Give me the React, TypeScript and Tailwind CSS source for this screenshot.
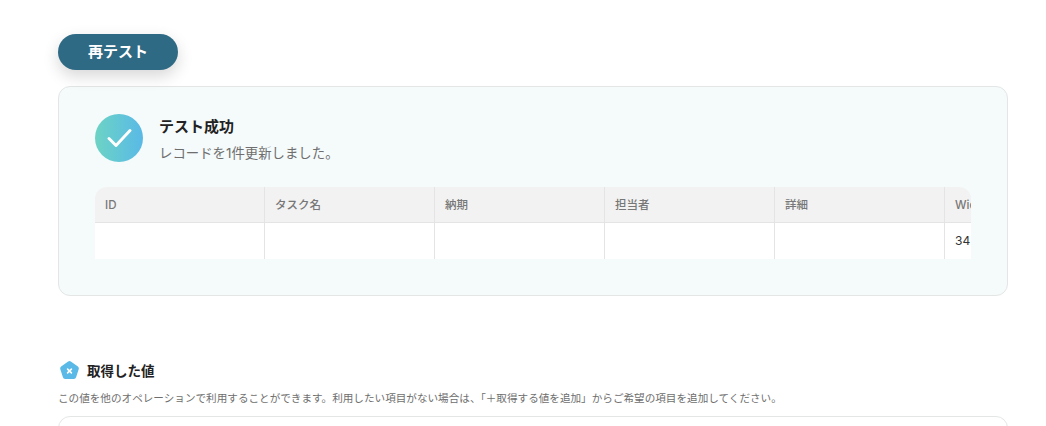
const columns = ["ID", "タスク名", "納期", "担当者", "詳細", "Width"];
const values = ["", "", "", "", "", "34"];

function CheckBadge() {
  return (
    <div className="flex h-12 w-12 shrink-0 items-center justify-center rounded-full bg-gradient-to-r from-[#6dd3c4] to-[#5ab9e6]">
      <svg width="25" height="20" viewBox="0 0 25 20" fill="none">
        <path d="M2 10.5L9 17.5L23 2.5" stroke="white" strokeWidth="2.9" strokeLinecap="round" strokeLinejoin="round" />
      </svg>
    </div>
  );
}

function PentagonIcon() {
  return (
    <svg width="21" height="21" viewBox="0 0 22 22" fill="none">
      <path
        d="M9.6 1.5a2.4 2.4 0 0 1 2.8 0l7.4 5.3a2.4 2.4 0 0 1 .9 2.7l-2.8 8.6a2.4 2.4 0 0 1-2.3 1.7H6.4a2.4 2.4 0 0 1-2.3-1.7L1.3 9.5a2.4 2.4 0 0 1 .9-2.7z"
        fill="#5ab9e6"
      />
      <path d="M9 9.5L13 13.5M13 9.5L9 13.5" stroke="white" strokeWidth="1.7" strokeLinecap="round" />
    </svg>
  );
}

export default function App() {
  return (
    <main className="h-[426px] overflow-hidden bg-white pt-[34px] pl-[58px] pr-[38px] font-['Inter','Noto_Sans_CJK_JP',sans-serif]">
      <button className="h-9 w-[120px] rounded-full bg-[#2f6a85] text-[15px] font-bold text-white shadow-[0_6px_16px_rgba(0,0,0,0.16)]">
        再テスト
      </button>

      <section className="mt-4 h-[210px] rounded-xl border border-[#e4e6e6] bg-[#f5fafa] px-9 pt-[27px]">
        <div className="flex items-start gap-4">
          <CheckBadge />
          <div>
            <h2 className="text-[15px] leading-[26px] font-bold text-[#222222]">テスト成功</h2>
            <p className="text-[13.4px] leading-[26px] text-[#6e6e6e]">レコードを1件更新しました。</p>
          </div>
        </div>

        <div className="mt-[21px] overflow-hidden rounded-t-xl">
          <div className="flex h-9 border-b border-[#e4e4e4] bg-[#f2f2f2]">
            {columns.map((c) => (
              <div
                key={c}
                className="w-[170px] shrink-0 border-r border-[#e4e4e4] px-2.5 text-[11.5px] leading-9 font-medium text-[#777777]"
              >
                {c}
              </div>
            ))}
          </div>
          <div className="flex h-9 bg-white">
            {values.map((v, i) => (
              <div
                key={i}
                className="w-[170px] shrink-0 border-r border-[#e4e4e4] px-2.5 text-xs leading-9 text-[#333333]"
              >
                {v}
              </div>
            ))}
          </div>
        </div>
      </section>

      <div className="mt-16 flex items-center gap-[7px] pl-px">
        <PentagonIcon />
        <h3 className="text-[13.5px] leading-5 font-bold text-[#222222]">取得した値</h3>
      </div>
      <p className="mt-[10px] text-[10.6px] leading-4 text-[#6e6e6e]">
        この値を他のオペレーションで利用することができます。利用したい項目がない場合は、「＋取得する値を追加」からご希望の項目を追加してください。
      </p>
      <div className="mt-[9px] h-16 rounded-xl border border-[#e4e6e6] bg-white" />
    </main>
  );
}
